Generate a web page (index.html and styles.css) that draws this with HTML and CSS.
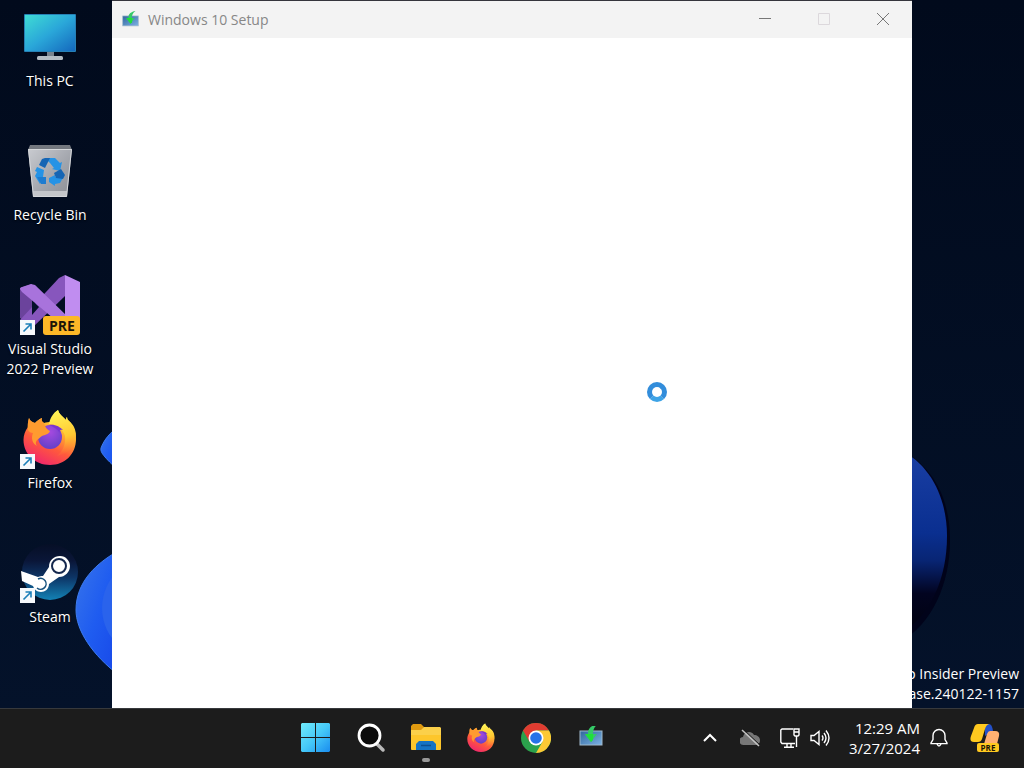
FILE: index.html
```html
<!DOCTYPE html>
<html lang="en">
<head>
  <meta charset="UTF-8">
  <meta name="viewport" content="width=device-width, initial-scale=1.0">
  <title>Windows 10 Setup</title>
  <link rel="stylesheet" href="styles.css">
</head>
<body>
  <!-- shared icons -->
  <svg class="defs" width="0" height="0" aria-hidden="true">
    <defs>
      <linearGradient id="fx-body" x1="0.8" y1="0" x2="0.3" y2="1">
        <stop offset="0" stop-color="#fff04a"/>
        <stop offset="0.35" stop-color="#ffb62e"/>
        <stop offset="0.65" stop-color="#ff5a3c"/>
        <stop offset="1" stop-color="#f0256e"/>
      </linearGradient>
      <linearGradient id="fx-tail" x1="0.4" y1="0" x2="0.6" y2="1">
        <stop offset="0" stop-color="#fff356"/>
        <stop offset="0.6" stop-color="#ffc832"/>
        <stop offset="1" stop-color="#ff7a35" stop-opacity="0"/>
      </linearGradient>
      <radialGradient id="fx-globe" cx="0.5" cy="0.3" r="0.8">
        <stop offset="0" stop-color="#a64ae0"/>
        <stop offset="1" stop-color="#5a3fc4"/>
      </radialGradient>
      <linearGradient id="setup-screen" x1="0" y1="0" x2="1" y2="1">
        <stop offset="0" stop-color="#2f659c"/>
        <stop offset="1" stop-color="#7db2e4"/>
      </linearGradient>
      <symbol id="firefox" viewBox="0 0 60 60">
        <path fill="url(#fx-body)" d="M9 9c-1 3-1 6-1 9C5 22 3.500 26 3.500 31 3.500 45 15 56 30 56s26-11 26-26c0-8-3-14-7-18-1-1-2-2-2-4-1 1-1 2-1 3C42 7 39 5 38 1c-4 3-6 7-7 12-2 0-5 0-7 1-2-1-3-3-2-5-3 1-5 3-7 5-3-1-5-2-6-5z"/>
        <path fill="url(#fx-tail)" d="M38 1c-5 3-8 8-9 14 8 0 14 5 16 12 1 8-2 15-8 20 11-2 19-10 19-20 0-7-3-12-7-15-1-1-2-2-2-4-1 1-1 2-1 3C42 7 39 5 38 1z"/>
        <circle cx="30" cy="28" r="12" fill="url(#fx-globe)"/>
        <path fill="#ff9b2f" d="M9 9c1 3 3 4 6 5 2-2 4-4 7-5-1 2 0 4 2 5 1 3 2 6 6 8-1 3-5 4-8 5-2 1-3 3-5 4-1 2-2 3 0 6-5-3-6-8-4-13-2 0-4-1-5-3-1-4 0-8 1-12z"/>
        <path fill="#7a35cf" d="M29 16c6-1 11 2 14 5-3-1-4 0-3 3-3-4-6-6-11-8z"/>
      </symbol>
      <symbol id="setup" viewBox="0 0 24 24">
        <rect x="1" y="7" width="22" height="14" fill="url(#setup-screen)" stroke="#9fb8cb"/>
        <path fill="#35c968" d="M19 0c-6 1-10 4-10 9v1H6l6 8 6-8h-4c0-4 1-7 5-10z"/>
        <path fill="#1fe03a" d="M9 10h5v6l-2 2-6-8z"/>
      </symbol>
      <symbol id="shortcut" viewBox="0 0 15 15">
        <rect width="15" height="15" fill="#f6f9fc"/>
        <path d="M3.500 11.500l7-7M5.500 4h5.500v5.500" fill="none" stroke="#1c7fb8" stroke-width="1.600"/>
      </symbol>
    </defs>
  </svg>

  <main class="desktop">
    <svg class="wallpaper" viewBox="0 0 1024 708" preserveAspectRatio="xMidYMax slice" aria-hidden="true">
      <defs>
        <linearGradient id="petal" x1="0" y1="0" x2="1" y2="1">
          <stop offset="0" stop-color="#3976ea"/>
          <stop offset="0.5" stop-color="#1f5cf0"/>
          <stop offset="1" stop-color="#1746e8"/>
        </linearGradient>
        <linearGradient id="petal-dark" x1="0" y1="0" x2="0" y2="1">
          <stop offset="0" stop-color="#1a3fa4"/>
          <stop offset="0.45" stop-color="#0a2f90"/>
          <stop offset="0.6" stop-color="#082574"/>
          <stop offset="0.78" stop-color="#020420"/>
          <stop offset="1" stop-color="#01020e"/>
        </linearGradient>
      </defs>
      <path fill="url(#petal)" stroke="#3d7cf0" d="M120 426C110 432 104 440 101 448c-1 4 2 8 19 24z"/>
      <path fill="url(#petal)" stroke="#3d7cf0" d="M120 550C96 563 76 582 76 610c0 20 16 45 44 66z"/>
      <path fill="#2a63ec" d="M120 569c-12 10-18 25-18 39 0 15 7 30 18 38z"/>
      <path fill="#01031a" d="M900 450c34 16 50 50 50 90 0 44-18 84-50 102z"/>
      <path fill="url(#petal-dark)" d="M900 450c30 14 47 48 47 86 0 43-17 80-47 98z"/>
    </svg>

    <div class="watermark">
      <p>Pro Insider Preview</p>
      <p>prerelease.240122-1157</p>
    </div>

    <nav class="shortcuts" aria-label="Desktop">
      <a class="shortcut" href="#">
        <svg class="shortcut-icon" viewBox="0 0 60 60" aria-hidden="true">
          <defs>
            <linearGradient id="pc" x1="0" y1="0" x2="1" y2="1">
              <stop offset="0" stop-color="#3fdcd4"/>
              <stop offset="0.5" stop-color="#2aa7d9"/>
              <stop offset="1" stop-color="#1468bd"/>
            </linearGradient>
          </defs>
          <path fill="#78838e" d="M27 44h7v7h-7z"/>
          <rect x="17" y="49" width="26" height="4" rx="1.500" fill="#b3bcc4"/>
          <rect x="4" y="7" width="52" height="38" rx="1" fill="#2680b5"/>
          <rect x="5" y="8" width="50" height="36" fill="url(#pc)"/>
        </svg>
        <span>This PC</span>
      </a>
      <a class="shortcut" href="#">
        <svg class="shortcut-icon" viewBox="0 0 60 60" aria-hidden="true">
          <defs>
            <linearGradient id="bin" x1="0" y1="0" x2="1" y2="1">
              <stop offset="0" stop-color="#c9cbd0"/>
              <stop offset="0.6" stop-color="#a0a3aa"/>
              <stop offset="1" stop-color="#8b8e95"/>
            </linearGradient>
          </defs>
          <path fill="#74787f" d="M10 4h40l2 5H8z"/>
          <path fill="url(#bin)" d="M8 8h44l-5 48H13z"/>
          <path fill="#c4c6ca" d="M13 50h34l-1 6H14z"/>
          <path fill="none" stroke="#d5d7da" d="M8.500 8.500h43l-5 47H13.500z"/>
          <g transform="translate(-2)">
            <path fill="#2593e6" d="M27 17h10l5 5 2-1-2 9-8-2 2-1-4-5z"/>
            <path fill="#1565b4" d="M27 17h5l-5 10-6-3 3-6z"/>
            <path fill="#2593e6" d="M19 26l7 3-1 7-3 7-5-8 2-4-2-1z"/>
            <path fill="#1e7cd0" d="M22 36h6v7h-5l-4-7z"/>
            <path fill="#2593e6" d="M31 37l6-3v2l9-1-4 7-5 1v2l-6-4z"/>
            <path fill="#1565b4" d="M36 32l7-4 4 6-2 4-7-1z"/>
          </g>
        </svg>
        <span>Recycle Bin</span>
      </a>
      <a class="shortcut" href="#">
        <svg class="shortcut-icon" viewBox="0 0 60 60" aria-hidden="true">
          <path fill="#6b439c" d="M0 13l12-4v43L0 43z"/>
          <path fill="#8756bd" d="M0 45L39 3l6-3v21L12 53z"/>
          <path fill="#04102a" d="M12 25l7 7-7 8z"/>
          <path fill="#a873dc" d="M0 14c0-1 1-2 2-2l9-3 4 1 31 30v14L2 17z"/>
          <path fill="#c08df0" d="M45 0l15 7v44l-15 6z"/>
          <rect x="23" y="41" width="37" height="19" rx="3" fill="#fdb827"/>
          <text class="vs-tag" x="42" y="56" text-anchor="middle">PRE</text>
          <use href="#shortcut" x="0" y="45" width="15" height="15"/>
        </svg>
        <span>Visual Studio<br>2022 Preview</span>
      </a>
      <a class="shortcut" href="#">
        <svg class="shortcut-icon" viewBox="0 0 60 60" aria-hidden="true">
          <use href="#firefox" width="60" height="60"/>
          <use href="#shortcut" x="0" y="45" width="15" height="15"/>
        </svg>
        <span>Firefox</span>
      </a>
      <a class="shortcut" href="#">
        <svg class="shortcut-icon" viewBox="0 0 60 60" aria-hidden="true">
          <defs>
            <linearGradient id="steam" x1="0" y1="0" x2="0" y2="1">
              <stop offset="0" stop-color="#060f26"/>
              <stop offset="0.3" stop-color="#0a1638"/>
              <stop offset="0.6" stop-color="#0d3566"/>
              <stop offset="1" stop-color="#1382b5"/>
            </linearGradient>
          </defs>
          <circle cx="30" cy="29" r="28" fill="url(#steam)"/>
          <path fill="#fff" d="M1 28l17 6c2-1 3-1 5-1l6-9c0-7 5-11 11-11 6 0 10 5 10 10 0 6-5 11-11 11l-10 7c0 5-4 8-8 8-4 0-7-3-8-6L2 38z"/>
          <circle cx="39" cy="23" r="7" fill="#fff" stroke="#15284e" stroke-width="2"/>
          <path d="M17 45a5.500 5.500 0 1 0 1-9" fill="none" stroke="#16517d" stroke-width="1.500"/>
          <use href="#shortcut" x="0" y="45" width="15" height="15"/>
        </svg>
        <span>Steam</span>
      </a>
    </nav>

    <section class="window">
      <header class="titlebar">
        <svg class="titlebar-icon" aria-hidden="true"><use href="#setup"/></svg>
        <h1>Windows 10 Setup</h1>
        <div class="controls">
          <button type="button" aria-label="Minimize">
            <svg viewBox="0 0 12 12"><path d="M0 5.500h12"/></svg>
          </button>
          <button type="button" aria-label="Maximize" disabled>
            <svg viewBox="0 0 12 12"><path d="M.5.500h11v11H.500z"/></svg>
          </button>
          <button type="button" aria-label="Close">
            <svg viewBox="0 0 12 12"><path d="M0 0l12 12M12 0L0 12"/></svg>
          </button>
        </div>
      </header>
      <div class="busy"></div>
    </section>
  </main>

  <footer class="taskbar">
    <div class="apps">
      <button type="button" aria-label="Start">
        <svg viewBox="0 0 30 30">
          <defs>
            <linearGradient id="win" gradientUnits="userSpaceOnUse" x1="0" y1="0" x2="30" y2="30">
              <stop offset="0" stop-color="#70ecfb"/>
              <stop offset="0.5" stop-color="#45c8f8"/>
              <stop offset="1" stop-color="#1688ee"/>
            </linearGradient>
          </defs>
          <path fill="url(#win)" d="M1 0h13v14H0V1zM15 0h13l1 1v13H15zM0 15h14v14H1l-1-1zM15 15h14v13l-1 1H15z"/>
        </svg>
      </button>
      <button type="button" aria-label="Search">
        <svg viewBox="0 0 30 30">
          <path d="M21 21l6 6" stroke="#b9b9b9" stroke-width="3.500" stroke-linecap="round"/>
          <circle cx="13.500" cy="12.500" r="10.500" fill="#0c0c0c" stroke="#fff" stroke-width="2.800"/>
        </svg>
      </button>
      <button type="button" class="open" aria-label="File Explorer">
        <svg viewBox="0 0 30 30">
          <path fill="#e09a10" d="M0 3l2-2h8l3 3-1 4H0z"/>
          <path fill="#fbd04a" d="M0 7h10l3-3h16l1 1v21l-1 1H1l-1-1z"/>
          <path fill="#fdc62b" d="M0 12h30v14l-1 1H1l-1-1z"/>
          <path fill="#1573c4" d="M5 27v-6l3-3h14l3 3v6z"/>
          <path stroke="#0c4f91" stroke-width="1.500" d="M10 22.500h10"/>
        </svg>
      </button>
      <button type="button" aria-label="Firefox">
        <svg viewBox="2 0 56 58"><use href="#firefox" width="60" height="60"/></svg>
      </button>
      <button type="button" aria-label="Chrome">
        <svg viewBox="0 0 30 30">
          <circle cx="15" cy="15" r="15" fill="#2ba24c"/>
          <path fill="#e03c31" d="M2 7.500A15 15 0 0 1 28 7.500H15L8.500 18.800z"/>
          <path fill="#fcc934" d="M28 7.500A15 15 0 0 1 15 30l6.500-11.300L15 7.500z"/>
          <circle cx="15" cy="15" r="7.500" fill="#fff"/>
          <circle cx="15" cy="15" r="5.800" fill="#2673e8"/>
        </svg>
      </button>
      <button type="button" aria-label="Windows 10 Setup">
        <svg class="small" viewBox="0 2 24 24"><use href="#setup" width="24" height="24"/></svg>
      </button>
    </div>

    <div class="tray">
      <button type="button" class="chevron" aria-label="Show hidden icons">
        <svg viewBox="0 0 20 20"><path d="M4 13l6-6 6 6" stroke-width="2"/></svg>
      </button>
      <button type="button" class="cloud" aria-label="OneDrive">
        <svg viewBox="0 0 20 20">
          <path class="cloud-shape" d="M4 17a4 4 0 0 1-1-8c1-5 8-7 11-2 3 0 6 2 6 5 0 4-2 5-5 5z"/>
          <path class="cloud-gap" d="M3 1l17 16"/>
          <path class="cloud-slash" d="M2 2l17 16"/>
        </svg>
      </button>
      <button type="button" class="status" aria-label="Network and volume">
        <svg viewBox="0 0 20 20">
          <path d="M13 1H2L.8 2v12L2 15.500h13M7 15.500v3.500M11 15.500v3.500M4 19.200h10M14 1h5v6l-1 1h-3l-1-1zM14 4h5M16.500 8v11" stroke-width="1.400"/>
        </svg>
        <svg viewBox="0 0 20 20">
          <path d="M1 7.500v5h3l5 4V3.500l-5 4zM12 7.500q2 2.500 0 5M14 5q4 5 0 10M16 2.500q6 7.500 0 15" stroke-width="1.400"/>
        </svg>
      </button>
      <button type="button" class="clock">
        <time datetime="2024-03-27T00:29">12:29 AM<br>3/27/2024</time>
      </button>
      <button type="button" class="bell" aria-label="Notifications">
        <svg viewBox="0 0 20 20">
          <path d="M10 1.500a6 6 0 0 0-6 6v4L2 15v.6h16V15l-2-3.500v-4a6 6 0 0 0-6-6zM8 16q2 4 4 0" stroke-width="1.400"/>
        </svg>
      </button>
      <button type="button" class="copilot" aria-label="Copilot">
        <svg viewBox="0 0 30 30">
          <path fill="#2450c8" d="M15 1h4q3 0 4 7l-8 5z"/>
          <path fill="#ffc91f" d="M8 1h11q-3 1-4 5l-3 10q-1 3-4 3H4q-5 0-3-6l3-8q1-4 4-4z"/>
          <path fill="#ffb071" d="M20 8h5q5 0 4 5l-2 8H14l3-10q1-3 3-3z"/>
          <rect x="7" y="20" width="22" height="9" rx="2" fill="#ffc91f"/>
          <text class="copilot-tag" x="18" y="28" text-anchor="middle">PRE</text>
        </svg>
      </button>
    </div>
  </footer>
</body>
</html>
```
FILE: styles.css
```css
:root {
  --taskbar: #1c1c1c;
  --titlebar: #f3f3f3;
  --muted: #878787;
}
* {
  margin: 0;
  padding: 0;
  box-sizing: border-box;
}
body {
  display: flex;
  flex-direction: column;
  height: 100vh;
  overflow: hidden;
  font-family: "Open Sans", "Noto Sans", sans-serif;
  font-size: 14px;
  line-height: 20px;
  color: #fff;
}
button {
  border: none;
  background: none;
  color: inherit;
  font: inherit;
}
.defs {
  position: absolute;
}

/* desktop */
.desktop {
  position: relative;
  flex: 1;
  min-height: 0;
  background: linear-gradient(to bottom, #010a1c, #04122a);
}
.wallpaper {
  position: absolute;
  width: 100%;
  height: 100%;
}
.shortcuts {
  position: relative;
  display: grid;
  grid-auto-rows: 134px;
  width: 100px;
}
.shortcut {
  display: flex;
  flex-direction: column;
  align-items: center;
  gap: 4px;
  padding-top: 7px;
  color: #fff;
  text-align: center;
  text-decoration: none;
}
.shortcut span {
  white-space: nowrap;
  text-shadow: 0 1px 2px #000;
}
.shortcut-icon {
  flex: none;
  width: 60px;
  height: 60px;
}
.vs-tag {
  font: 700 14px "Open Sans", sans-serif;
  fill: #1d1508;
}
.watermark {
  position: absolute;
  right: 5px;
  bottom: 4px;
  text-align: right;
}

/* setup window */
.window {
  position: absolute;
  top: 0;
  bottom: 0;
  left: 112px;
  right: 112px;
  border-top: 1px solid #35353c;
  background: #fff;
}
.titlebar {
  display: flex;
  align-items: center;
  height: 37px;
  padding-left: 10px;
  background: var(--titlebar);
  color: var(--muted);
}
.titlebar-icon {
  width: 17px;
  height: 17px;
  margin-right: 9px;
}
.titlebar h1 {
  font-size: 14px;
  font-weight: 400;
}
.controls {
  display: flex;
  margin-left: auto;
}
.controls button {
  width: 59px;
  height: 37px;
}
.controls svg {
  width: 12px;
  height: 12px;
  fill: none;
  stroke: #777;
}
.controls button:disabled svg {
  stroke: #dcd8dc;
}
.busy {
  position: absolute;
  top: 381px;
  left: 535px;
  width: 20px;
  height: 20px;
  border: 5px solid #328ddb;
  border-bottom-color: #3da3e6;
  border-radius: 50%;
}

/* taskbar */
.taskbar {
  display: flex;
  justify-content: flex-end;
  gap: 75px;
  height: 60px;
  padding-bottom: 1px;
  border-top: 1px solid #37393c;
  background: var(--taskbar);
}
.apps,
.tray {
  display: flex;
}
.apps button,
.tray button {
  display: flex;
  align-items: center;
  justify-content: center;
}
.apps button {
  position: relative;
  width: 55px;
}
.apps svg {
  width: 30px;
  height: 30px;
}
.apps .small {
  width: 24px;
  height: 24px;
}
.open::after {
  content: "";
  position: absolute;
  bottom: 5px;
  width: 8px;
  height: 4px;
  border-radius: 2px;
  background: #999;
}
.tray svg {
  width: 20px;
  height: 20px;
}
.tray .chevron svg,
.tray .cloud svg,
.tray .status svg,
.tray .bell svg {
  fill: none;
  stroke: #fff;
}
.chevron {
  width: 34px;
}
.cloud {
  width: 46px;
}
.cloud-shape {
  fill: #777;
  stroke: none;
}
.cloud-gap {
  stroke: var(--taskbar);
  stroke-width: 1;
}
.cloud-slash {
  stroke: #c4c4c4;
  stroke-width: 1.5;
}
.status {
  gap: 10px;
  width: 64px;
}
.clock {
  width: 88px;
  padding-right: 5px;
  font-size: 15px;
}
.tray .clock {
  justify-content: flex-end;
  font-size: 15px;
  text-align: right;
}
.bell {
  width: 28px;
}
.copilot {
  width: 71px;
  padding-right: 8px;
}
.tray .copilot svg {
  width: 30px;
  height: 30px;
}
.copilot-tag {
  font: 700 8px "Open Sans", sans-serif;
  fill: #1d1508;
}
```
